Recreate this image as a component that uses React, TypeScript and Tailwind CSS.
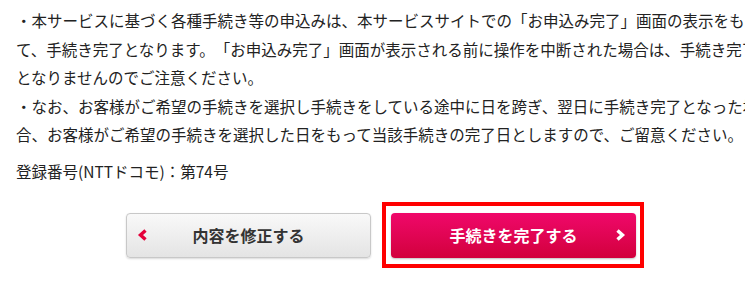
const FONT = "font-['Noto_Sans_CJK_JP','Noto_Sans',sans-serif]";

function ChevronLeft() {
  return (
    <svg width="11" height="12" viewBox="0 0 11 12" className="shrink-0">
      <polyline points="8.5,1.5 3.5,6 8.5,10.5" fill="none" stroke="#e4003a" strokeWidth="3.4" strokeLinejoin="miter" />
    </svg>
  );
}

function ChevronRight() {
  return (
    <svg width="11" height="12" viewBox="0 0 11 12" className="shrink-0">
      <polyline points="2.5,1.5 7.5,6 2.5,10.5" fill="none" stroke="#ffffff" strokeWidth="3.4" strokeLinejoin="miter" />
    </svg>
  );
}

export default function App() {
  return (
    <div className={`h-[282px] w-[745px] overflow-hidden bg-white ${FONT}`}>
      <div className="w-[784px] px-4 pt-[6px] text-[15.5px] leading-[28.5px] text-[#222] [text-spacing-trim:space-all]">
        <p>
          ・本サービスに基づく各種手続き等の申込みは、本サービスサイトでの「お申込み完了」画面の表示をもって、手続き完了となります。「お申込み完了」画面が表示される前に操作を中断された場合は、手続き完了となりませんのでご注意ください。
          <br />
          ・なお、お客様がご希望の手続きを選択し手続きをしている途中に日を跨ぎ、翌日に手続き完了となった場合、お客様がご希望の手続きを選択した日をもって当該手続きの完了日としますので、ご留意ください。
        </p>
        <p className="mt-[8.5px]">登録番号(NTTドコモ)：第74号</p>

        <div className="mt-[27px] flex gap-5 pl-[110px]">
          <button className="flex h-[45px] w-[245px] items-center rounded-[4px] border border-[#c8c8c8] bg-gradient-to-b from-[#f9f9f9] to-[#e4e4e4] px-[10px] shadow-[0_1px_2px_rgba(0,0,0,0.15)]">
            <ChevronLeft />
            <span className="flex-1 pr-[11px] text-center text-[16px] font-bold text-[#333]">内容を修正する</span>
          </button>
          <button className="relative flex h-[45px] w-[245px] items-center rounded-[4px] bg-gradient-to-b from-[#f0076a] to-[#d2003c] px-[10px] shadow-[0_1px_2px_rgba(0,0,0,0.25)]">
            <span className="flex-1 pl-[11px] text-center text-[16px] font-bold text-white">手続きを完了する</span>
            <ChevronRight />
            <span className="pointer-events-none absolute -top-[11px] -right-[8px] -bottom-[10px] -left-[9px] border-4 border-[#ff0000]" />
          </button>
        </div>
      </div>
    </div>
  );
}
